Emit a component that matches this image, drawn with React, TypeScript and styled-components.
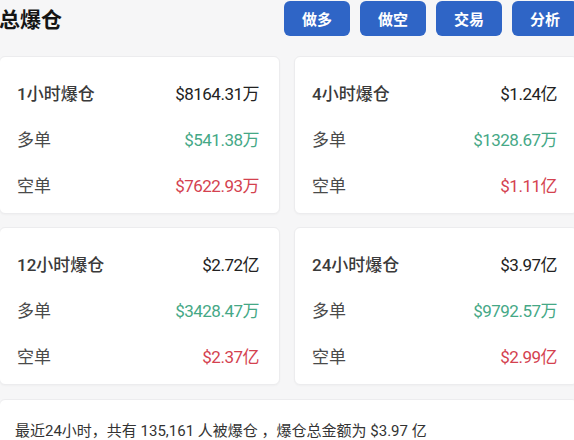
import React from "react";
import styled, { createGlobalStyle } from "styled-components";

const Global = createGlobalStyle`
  html, body { margin: 0; padding: 0; background: #f6f6f7; }
  body { font-family: Roboto, "Noto Sans CJK SC", sans-serif; overflow: hidden; }
`;

const Page = styled.div`
  width: 579px;
  margin-left: -1px;
  padding-top: 1px;
  display: flex;
  flex-direction: column;
`;

const Header = styled.div`
  display: flex;
  align-items: center;
  justify-content: space-between;
  height: 35px;
`;

const Title = styled.h1`
  margin: 0;
  font-family: "Noto Sans CJK SC", sans-serif;
  font-size: 21px;
  font-weight: 700;
  color: #151515;
  line-height: 35px;
`;

const Buttons = styled.div`
  display: flex;
  gap: 10px;
`;

const Button = styled.button`
  width: 66px;
  height: 35px;
  border: none;
  border-radius: 6px;
  background: #2f65c6;
  color: #fff;
  font-family: "Noto Sans CJK SC", sans-serif;
  font-size: 15px;
  font-weight: 700;
  padding: 0;
`;

const Grid = styled.div`
  display: grid;
  grid-template-columns: 281px 284px;
  column-gap: 14px;
  row-gap: 13px;
  margin-top: 20px;
`;

const Card = styled.div`
  background: #fff;
  border: 1px solid #ececee;
  border-radius: 6px;
  box-shadow: 0 1px 2px rgba(0, 0, 0, 0.03);
  padding: 21px 20px 15px 17px;
  display: flex;
  flex-direction: column;
  gap: 18px;
`;

const Row = styled.div`
  display: flex;
  justify-content: space-between;
  align-items: center;
  height: 28px;
`;

const Label = styled.span<{ $strong?: boolean }>`
  font-family: Roboto, "Noto Sans CJK SC", sans-serif;
  font-size: 17px;
  font-weight: ${(p) => (p.$strong ? 500 : 400)};
  color: ${(p) => (p.$strong ? "#3a3a3a" : "#4a4a4a")};
`;

const Value = styled.span<{ $tone: "dark" | "green" | "red" }>`
  font-family: Roboto, "Noto Sans CJK SC", sans-serif;
  font-size: 17px;
  letter-spacing: -0.5px;
  color: ${(p) =>
    p.$tone === "green" ? "#45a886" : p.$tone === "red" ? "#d4424f" : "#222"};
`;

const Footer = styled.div`
  margin-top: 14px;
  background: #fff;
  border: 1px solid #ececee;
  border-radius: 6px;
  padding: 20px 16px 20px 15px;
  font-family: Roboto, "Noto Sans CJK SC", sans-serif;
  font-size: 15px;
  color: #333;
  line-height: 22px;
`;

const data = [
  { t: "1小时爆仓", total: "$8164.31万", long: "$541.38万", short: "$7622.93万" },
  { t: "4小时爆仓", total: "$1.24亿", long: "$1328.67万", short: "$1.11亿" },
  { t: "12小时爆仓", total: "$2.72亿", long: "$3428.47万", short: "$2.37亿" },
  { t: "24小时爆仓", total: "$3.97亿", long: "$9792.57万", short: "$2.99亿" },
];

export default function App() {
  return (
    <>
      <Global />
      <Page>
        <Header>
          <Title>总爆仓</Title>
          <Buttons>
            <Button>做多</Button>
            <Button>做空</Button>
            <Button>交易</Button>
            <Button>分析</Button>
          </Buttons>
        </Header>
        <Grid>
          {data.map((d) => (
            <Card key={d.t}>
              <Row>
                <Label $strong>{d.t}</Label>
                <Value $tone="dark">{d.total}</Value>
              </Row>
              <Row>
                <Label>多单</Label>
                <Value $tone="green">{d.long}</Value>
              </Row>
              <Row>
                <Label>空单</Label>
                <Value $tone="red">{d.short}</Value>
              </Row>
            </Card>
          ))}
        </Grid>
        <Footer>最近24小时，共有 135,161 人被爆仓 ，爆仓总金额为 $3.97 亿</Footer>
      </Page>
    </>
  );
}
